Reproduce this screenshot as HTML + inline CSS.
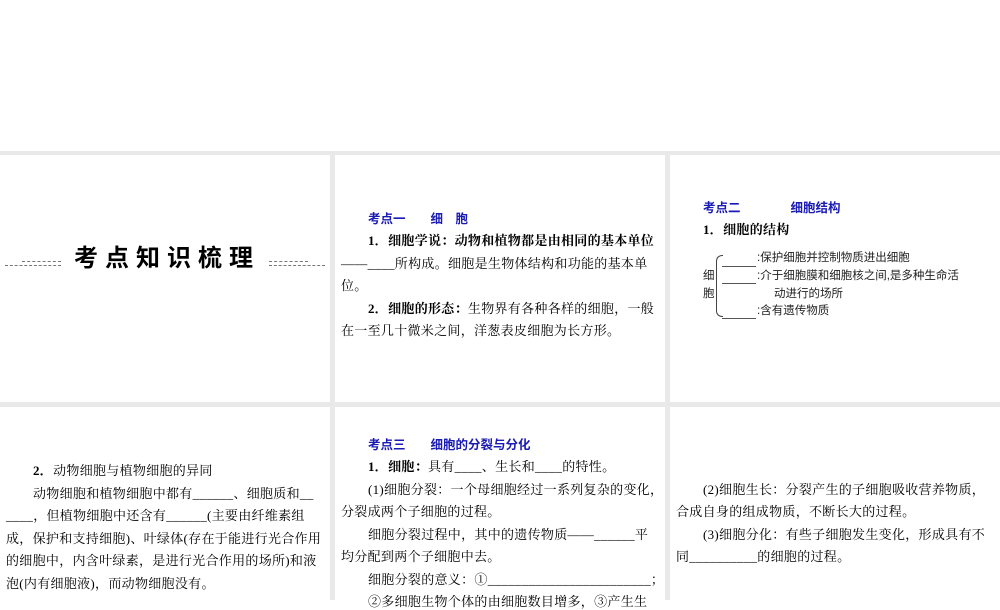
<!DOCTYPE html>
<html><head><meta charset="utf-8"><style>
body{margin:0;width:1000px;height:600px;background:#fff;position:relative;overflow:hidden;font-family:"Liberation Serif","Noto Serif CJK SC",serif;color:#000}
.g{position:absolute;background:#e9e9e9}
.p{position:absolute;background:#fff;overflow:hidden}
.l{position:absolute;white-space:nowrap;font-size:13px;line-height:16px;letter-spacing:0.3px}
.b{font-weight:bold}
.h{color:#1a1ab4;font-weight:bold;font-family:"Liberation Sans","Noto Sans CJK SC",sans-serif;font-size:12.5px;letter-spacing:0}
.s{font-family:"Liberation Sans","Noto Sans CJK SC",sans-serif;font-size:11.5px;color:#222;letter-spacing:0}
.d{position:absolute;border-top:1px dashed #777;height:0}
</style></head><body>
<div class="g" style="left:0;top:151px;width:1000px;height:449px"></div>
<div class="p" style="left:0;top:155px;width:330px;height:247px"></div>
<div class="p" style="left:335px;top:155px;width:330px;height:247px"></div>
<div class="p" style="left:670px;top:155px;width:330px;height:247px"></div>
<div class="p" style="left:0;top:407px;width:330px;height:193px"></div>
<div class="p" style="left:335px;top:407px;width:330px;height:193px"></div>
<div class="p" style="left:670px;top:407px;width:330px;height:193px"></div>

<div class="d" style="left:5px;top:265px;width:56px"></div>
<div class="d" style="left:22px;top:261px;width:39px"></div>
<div class="d" style="left:269px;top:265px;width:56px"></div>
<div class="d" style="left:269px;top:261px;width:39px"></div>
<div class="l" style="left:74px;top:245px;font-size:24px;line-height:28px;font-weight:bold;letter-spacing:7px;font-family:'Liberation Sans','Noto Sans CJK SC',sans-serif">考点知识梳理</div>

<div class="l h" style="left:368px;top:211px">考点一　　细　胞</div>
<div class="l b" style="left:368px;top:233px">1．细胞学说：动物和植物都是由相同的基本单位</div>
<div class="l" style="left:341px;top:256px">——____所构成。细胞是生物体结构和功能的基本单</div>
<div class="l" style="left:341px;top:278px">位。</div>
<div class="l" style="left:368px;top:301px"><b>2．细胞的形态：</b>生物界有各种各样的细胞，一般</div>
<div class="l" style="left:341px;top:323px">在一至几十微米之间，洋葱表皮细胞为长方形。</div>

<div class="l h" style="left:703px;top:200px">考点二　　　　细胞结构</div>
<div class="l b" style="left:703px;top:222px">1．细胞的结构</div>
<div class="l s" style="left:703px;top:268px">细</div>
<div class="l s" style="left:703px;top:286px">胞</div>
<div style="position:absolute;left:716px;top:255px;width:6px;height:60px;border:1px solid #444;border-right:none;border-radius:6px 0 0 6px"></div>
<div class="d" style="left:722px;top:266px;width:34px;border-top:1px solid #555"></div>
<div class="d" style="left:722px;top:283px;width:34px;border-top:1px solid #555"></div>
<div class="d" style="left:722px;top:318px;width:34px;border-top:1px solid #555"></div>
<div class="l s" style="left:757px;top:250px">:保护细胞并控制物质进出细胞</div>
<div class="l s" style="left:757px;top:268px">:介于细胞膜和细胞核之间,是多种生命活</div>
<div class="l s" style="left:774px;top:286px">动进行的场所</div>
<div class="l s" style="left:757px;top:303px">:含有遗传物质</div>

<div class="l" style="left:33px;top:463px"><b>2．</b>动物细胞与植物细胞的异同</div>
<div class="l" style="left:33px;top:486px">动物细胞和植物细胞中都有______、细胞质和__</div>
<div class="l" style="left:6px;top:508px">____，但植物细胞中还含有______(主要由纤维素组</div>
<div class="l" style="left:6px;top:531px">成，保护和支持细胞)、叶绿体(存在于能进行光合作用</div>
<div class="l" style="left:6px;top:553px">的细胞中，内含叶绿素，是进行光合作用的场所)和液</div>
<div class="l" style="left:6px;top:576px">泡(内有细胞液)，而动物细胞没有。</div>

<div class="l h" style="left:368px;top:437px">考点三　　细胞的分裂与分化</div>
<div class="l" style="left:368px;top:459px"><b>1．细胞：</b>具有____、生长和____的特性。</div>
<div class="l" style="left:368px;top:482px">(1)细胞分裂：一个母细胞经过一系列复杂的变化，</div>
<div class="l" style="left:341px;top:504px">分裂成两个子细胞的过程。</div>
<div class="l" style="left:368px;top:527px">细胞分裂过程中，其中的遗传物质——______平</div>
<div class="l" style="left:341px;top:549px">均分配到两个子细胞中去。</div>
<div class="l" style="left:368px;top:572px">细胞分裂的意义：①________________________；</div>
<div class="l" style="left:368px;top:594px">②多细胞生物个体的由细胞数目增多，③产生生</div>

<div class="l" style="left:703px;top:482px">(2)细胞生长：分裂产生的子细胞吸收营养物质，</div>
<div class="l" style="left:676px;top:504px">合成自身的组成物质，不断长大的过程。</div>
<div class="l" style="left:703px;top:527px">(3)细胞分化：有些子细胞发生变化，形成具有不</div>
<div class="l" style="left:676px;top:549px">同__________的细胞的过程。</div>
</body></html>
